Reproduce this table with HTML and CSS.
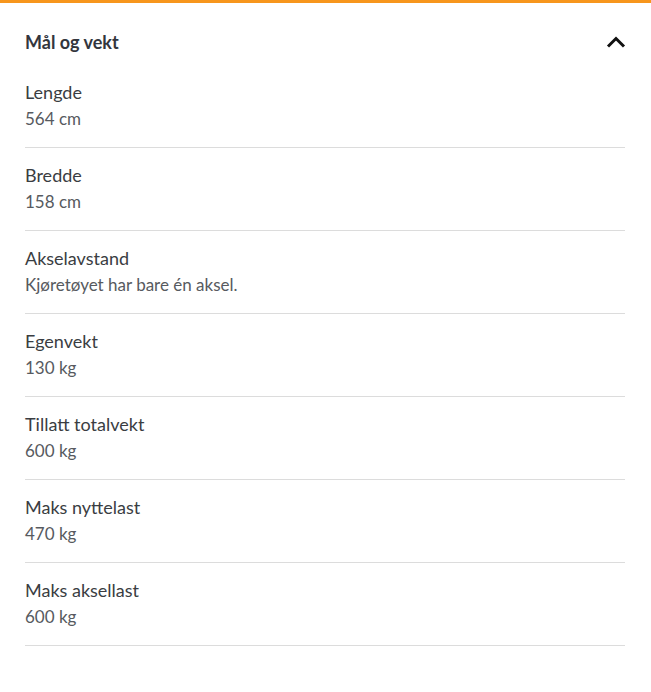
FILE: index.html
```html
<!DOCTYPE html>
<html lang="no">
<head>
    <meta charset="utf-8">
    <meta name="viewport" content="width=device-width, initial-scale=1.0">
    <title>Mål og vekt</title>
    <link rel="stylesheet" href="styles.css">
</head>

<body>
    <section class="panel">
        <header class="panel-head">
            <h2>Mål og vekt</h2>
            <svg class="chevron" width="20" height="12" viewBox="0 0 20 12">
                <polyline points="2,10.5 10,2.5 18,10.5" />
            </svg>
        </header>
        <dl class="facts">
            <div class="fact">
                <dt>Lengde</dt>
                <dd>564 cm</dd>
            </div>
            <div class="fact">
                <dt>Bredde</dt>
                <dd>158 cm</dd>
            </div>
            <div class="fact">
                <dt>Akselavstand</dt>
                <dd>Kjøretøyet har bare én aksel.</dd>
            </div>
            <div class="fact">
                <dt>Egenvekt</dt>
                <dd>130 kg</dd>
            </div>
            <div class="fact">
                <dt>Tillatt totalvekt</dt>
                <dd>600 kg</dd>
            </div>
            <div class="fact">
                <dt>Maks nyttelast</dt>
                <dd>470 kg</dd>
            </div>
            <div class="fact">
                <dt>Maks aksellast</dt>
                <dd>600 kg</dd>
            </div>
        </dl>
    </section>
</body>
</html>
```

FILE: styles.css
```css
body {
    margin: 0;
    background-color: #fff;
    font-family: 'Lato', 'Noto Sans', sans-serif;
}

.panel {
    border-top: 3px solid #f7961c;
    padding: 0 26px 0 25px;
}

.panel-head {
    display: flex;
    justify-content: space-between;
    align-items: center;
    padding: 26px 0 10px;
}

.panel-head h2 {
    margin: 0;
    font-size: 18px;
    line-height: 26px;
    font-weight: 700;
    color: #33363d;
}

.chevron {
    margin-right: -1px;
}

.chevron polyline {
    fill: none;
    stroke: #111;
    stroke-width: 3;
}

.facts {
    margin: 0;
}

.fact {
    padding: 14px 0 15px;
    border-bottom: 1px solid #dcdcdc;
}

.fact dt {
    font-size: 18px;
    line-height: 26px;
    color: #3a3d42;
}

.fact dd {
    margin: 0;
    font-size: 17px;
    line-height: 27px;
    color: #575a60;
}
```
